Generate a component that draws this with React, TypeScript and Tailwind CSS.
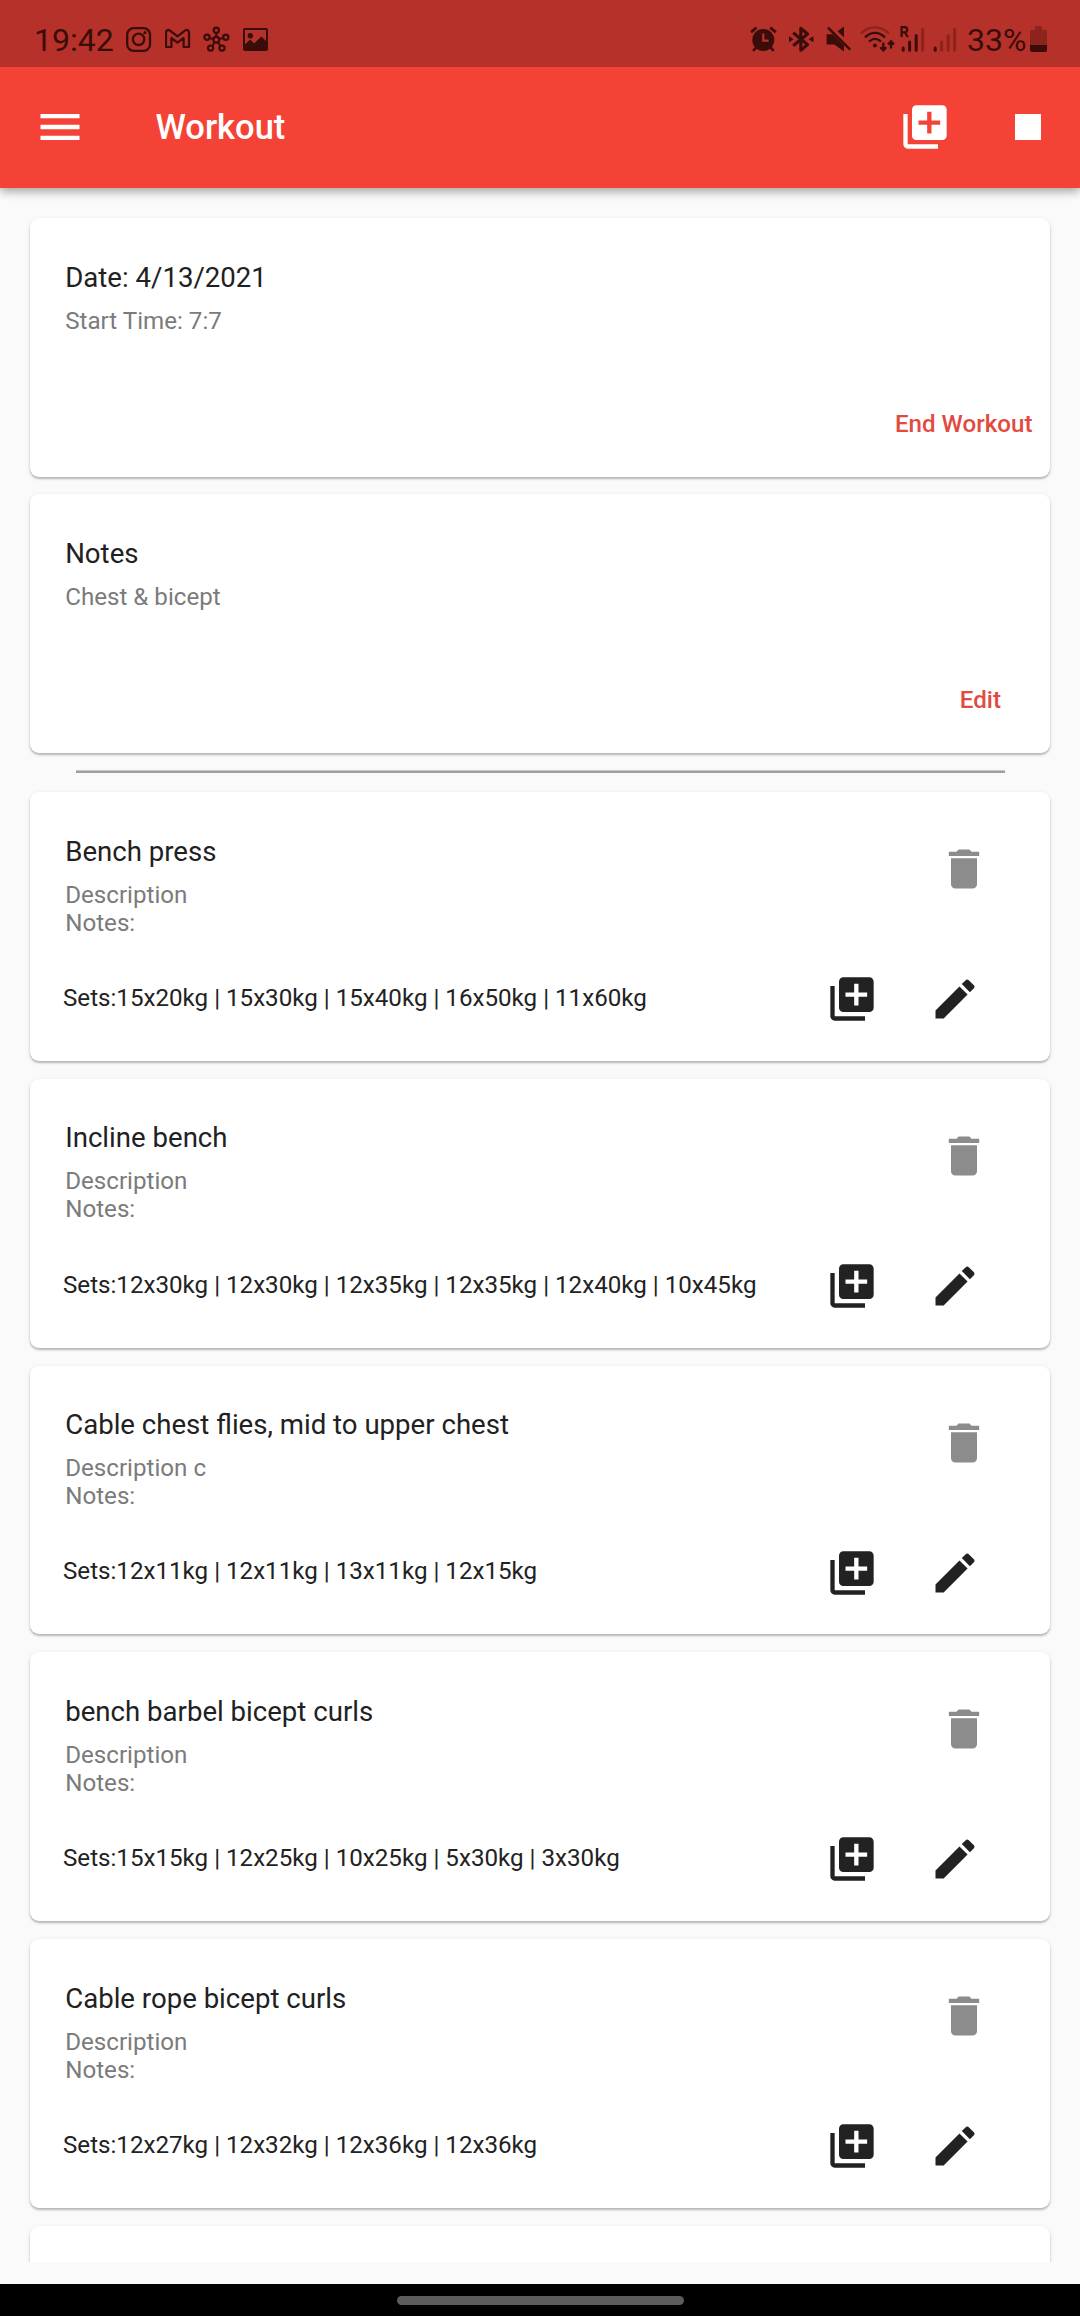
import React from "react";

type Exercise = { name: string; description: string; sets: string };

const exercises: Exercise[] = [
  { name: "Bench press", description: "Description", sets: "15x20kg | 15x30kg | 15x40kg | 16x50kg | 11x60kg" },
  { name: "Incline bench", description: "Description", sets: "12x30kg | 12x30kg | 12x35kg | 12x35kg | 12x40kg | 10x45kg" },
  { name: "Cable chest flies, mid to upper chest", description: "Description c", sets: "12x11kg | 12x11kg | 13x11kg | 12x15kg" },
  { name: "bench barbel bicept curls", description: "Description", sets: "15x15kg | 12x25kg | 10x25kg | 5x30kg | 3x30kg" },
  { name: "Cable rope bicept curls", description: "Description", sets: "12x27kg | 12x32kg | 12x36kg | 12x36kg" },
];

function Icon({ d, className = "" }: { d: string; className?: string }) {
  return (
    <svg viewBox="0 0 24 24" className={`size-[52px] shrink-0 fill-current ${className}`}>
      <path d={d} />
    </svg>
  );
}

const MENU = "M3 18h18v-2H3v2zm0-5h18v-2H3v2zm0-7v2h18V6H3z";
const LIBRARY_ADD =
  "M4 6H2v14c0 1.1.9 2 2 2h14v-2H4V6zm16-4H8c-1.1 0-2 .9-2 2v12c0 1.1.9 2 2 2h12c1.1 0 2-.9 2-2V4c0-1.1-.9-2-2-2zm-1 9h-4v4h-2v-4H9V9h4V5h2v4h4v2z";
const STOP = "M6 6h12v12H6z";
const DELETE = "M6 19c0 1.1.9 2 2 2h8c1.1 0 2-.9 2-2V7H6v12zM19 4h-3.5l-1-1h-5l-1 1H5v2h14V4z";
const EDIT =
  "M3 17.25V21h3.75L17.81 9.94l-3.75-3.75L3 17.25zM20.71 7.04c.39-.39.39-1.02 0-1.41l-2.34-2.34c-.39-.39-1.02-.39-1.41 0l-1.83 1.83 3.75 3.75 1.83-1.83z";

function StatusBar() {
  return (
    <div className="relative z-20 flex h-[67px] shrink-0 items-start bg-[#b63129] pl-[34px] pr-[33px] pt-[26px] text-[#3a0d0b]">
      <span className="-mt-[4px] w-[92px] text-[32px] leading-[37px]">19:42</span>

      {/* Instagram */}
      <svg viewBox="0 0 26 26" className="h-[26px] w-[26px]" fill="none" stroke="currentColor" strokeWidth="2.3">
        <rect x="1.2" y="2.2" width="22.8" height="22.6" rx="6.4" />
        <circle cx="12.6" cy="13.3" r="5.7" />
        <circle cx="18.9" cy="6.7" r="1.6" fill="currentColor" stroke="none" />
      </svg>
      {/* Gmail */}
      <svg viewBox="0 0 26 26" className="ml-[13px] h-[26px] w-[26px]" fill="none" stroke="currentColor" strokeWidth="2.2" strokeLinejoin="round">
        <path d="M1 6.4C1 4 3.5 3.4 5 4.6L12.5 10.4L20 4.6C21.5 3.4 24 4 24 6.4V21H18.6V12L12.5 16.6L6.4 12V21H1Z" />
      </svg>
      {/* Hub with five nodes */}
      <svg viewBox="0 0 26 26" className="ml-[13px] h-[26px] w-[26px] overflow-visible" fill="none" stroke="currentColor" strokeWidth="2.2">
        <circle cx="12.3" cy="13.8" r="2.9" />
        <circle cx="12.3" cy="4.2" r="2.6" />
        <circle cx="3" cy="11.3" r="2.6" />
        <circle cx="21.8" cy="11.3" r="2.6" />
        <circle cx="6.6" cy="22.1" r="2.6" />
        <circle cx="18" cy="22.1" r="2.6" />
        <path d="M12.3 6.8V11M5.4 12L9.5 13M19.2 12L15.1 13M8.1 20L10.6 16.3M16.5 20L14 16.3" />
      </svg>
      {/* Picture */}
      <svg viewBox="0 0 26 26" className="ml-[13px] h-[26px] w-[26px]">
        <path
          fill="currentColor"
          fillRule="evenodd"
          d="M2 2H23Q25 2 25 4V23Q25 25 23 25H2Q0 25 0 23V4Q0 2 2 2ZM2 4V18.6L7.2 13.6L11 17.4L18.4 10.4L23 15V4ZM7.3 7A2.7 2.7 0 1 1 7.3 12.4A2.7 2.7 0 1 1 7.3 7Z"
        />
      </svg>

      <div className="ml-auto flex items-start">
        {/* Alarm */}
        <svg viewBox="0 0 28 26" className="h-[26px] w-[28px]" fill="none" stroke="currentColor" strokeWidth="2.8">
          <circle cx="13.3" cy="14" r="11" fill="currentColor" stroke="none" />
          <path d="M1 6.3L6.5 1.6M25.8 6.3L20.3 1.6M6 21.5L3.2 25M20.8 21.5L23.6 25" />
          <path d="M13.3 7.5V14.6H18.6" stroke="#b63129" strokeWidth="2.2" />
        </svg>
        {/* Bluetooth */}
        <svg viewBox="0 0 26 27" className="ml-[11px] h-[27px] w-[26px]" fill="none" stroke="currentColor" strokeWidth="3.1">
          <path d="M4.2 6.8L18.6 18.6L11.8 24.2V2.4L18.6 8L4.2 19.8" strokeLinejoin="round" />
          <path d="M0 10.2L4.6 13.2L0 16.2ZM24.5 10.2L19.6 13.2L24.5 16.2Z" fill="currentColor" stroke="none" />
        </svg>
        {/* Muted speaker */}
        <svg viewBox="0 0 26 27" className="ml-[11px] h-[27px] w-[26px]" fill="currentColor">
          <path d="M0.6 8.2H6.8L18 19.6V25.6L8.4 18.6H0.6ZM18 0.4V11.4L11.4 5.2Z" />
          <path d="M2 1.6L24.2 23.6" stroke="currentColor" strokeWidth="2.5" />
        </svg>
        {/* Wi-Fi with traffic arrows */}
        <svg viewBox="0 0 36 27" className="ml-[8px] h-[27px] w-[36px]" fill="none" stroke="currentColor" strokeWidth="2.3">
          <path d="M1 7.4C9 -0.7 21 -0.7 29 7.4" stroke="#8c231d" />
          <path d="M5 11.4C11 5.3 19 5.3 25 11.4" />
          <path d="M9 15.6C13 12 17 12 21 15.6" />
          <circle cx="14.9" cy="19.4" r="2" fill="currentColor" stroke="none" />
          <path d="M23.3 16.4V24M20.3 21.2L23.3 24.3L26.3 21.2M31 22.6V15.6M28 18.4L31 15.3L34 18.4" />
        </svg>
        {/* Roaming signal */}
        <svg viewBox="0 0 26 27" className="ml-[4px] h-[27px] w-[26px]" fill="none" stroke="currentColor" strokeWidth="3" strokeLinecap="round">
          <path d="M3.2 22V24.2M9.6 16V24.2M16.2 9.4V24.2" />
          <path d="M22.6 3.4V24.2" stroke="#8c231d" />
          <path d="M1.6 11V1.2H4.6A2.4 2.4 0 0 1 4.6 6.4H1.6M5 6.6L7.8 11" strokeWidth="2.2" strokeLinecap="butt" />
        </svg>
        {/* Second signal */}
        <svg viewBox="0 0 26 27" className="ml-[6px] h-[27px] w-[26px]" fill="none" stroke="#8c231d" strokeWidth="3" strokeLinecap="round">
          <path d="M3.2 22V24.2" stroke="#3a0d0b" />
          <path d="M9.6 16V24.2M16.2 9.4V24.2M22.6 3.4V24.2" />
        </svg>
        <span className="-mt-[4px] ml-[9px] w-[63px] text-[32px] leading-[37px]">33%</span>
        {/* Battery */}
        <svg viewBox="0 0 17 26" className="h-[26px] w-[17px]">
          <path fill="#8c231d" d="M5 0H12V3.8H15Q17 3.8 17 5.8V19H0V5.8Q0 3.8 2 3.8H5Z" />
          <path fill="currentColor" d="M0 19H17V24Q17 26 15 26H2Q0 26 0 24Z" />
        </svg>
      </div>
    </div>
  );
}

function AppBar() {
  return (
    <header className="relative z-10 flex h-[120.5px] shrink-0 items-center bg-[#f44336] pl-[34px] pr-[26px] text-white shadow-[0_3px_9px_rgba(0,0,0,0.28),0_2px_12px_rgba(0,0,0,0.14)]">
      <Icon d={MENU} />
      <h1 className="ml-[69.5px] text-[34.5px] leading-[40px] font-medium">Workout</h1>
      <Icon d={LIBRARY_ADD} className="ml-auto" />
      <Icon d={STOP} className="ml-[51.5px]" />
    </header>
  );
}

const cardClass =
  "flex flex-col rounded-[9px] bg-white shadow-[0_2px_2px_rgba(0,0,0,0.22),0_1px_4px_rgba(0,0,0,0.10)]";

function Heading({ title, lines }: { title: string; lines: string[] }) {
  return (
    <div className="pl-[35.2px] pt-[42.7px]">
      <h2 className="text-[27.6px] leading-[34px] text-[#212121]">{title}</h2>
      <div className="mt-[12px] text-[24.15px] leading-[28px] text-[#7b7b7b]">
        {lines.map((line) => (
          <p key={line}>{line}</p>
        ))}
      </div>
    </div>
  );
}

function InfoCard({ title, line, action, actionClass }: { title: string; line: string; action: string; actionClass: string }) {
  return (
    <section className={`${cardClass} h-[258.5px]`}>
      <Heading title={title} lines={[line]} />
      <button className={`mt-[75.3px] self-end text-[24.15px] leading-[28px] font-medium text-[#e34a3f] ${actionClass}`}>{action}</button>
    </section>
  );
}

function ExerciseCard({ exercise }: { exercise: Exercise }) {
  return (
    <section className={`${cardClass} h-[268.75px] shrink-0`}>
      <div className="flex h-[181px] justify-between">
        <Heading title={exercise.name} lines={[exercise.description, "Notes:"]} />
        <Icon d={DELETE} className="mr-[60px] mt-[51px] text-[#8c8c8c]" />
      </div>
      <div className="flex h-[52px] items-center pl-[33px] pr-[69px] text-[#222222]">
        <p className="-mt-[2.5px] text-[24.15px] leading-[28px]">Sets:{exercise.sets}</p>
        <Icon d={LIBRARY_ADD} className="ml-auto" />
        <Icon d={EDIT} className="ml-[51px]" />
      </div>
    </section>
  );
}

export default function App() {
  return (
    <div className="flex h-[2316px] w-[1080px] flex-col overflow-hidden bg-[#fafafa] font-[Roboto,sans-serif]">
      <StatusBar />
      <AppBar />
      <main className="h-[2074.5px] shrink-0 overflow-hidden px-[30px] pt-[30.5px]">
        <div className="flex flex-col gap-[17.5px]">
          <InfoCard title="Date: 4/13/2021" line="Start Time: 7:7" action="End Workout" actionClass="mr-[17.5px]" />
          <InfoCard title="Notes" line="Chest & bicept" action="Edit" actionClass="mr-[49px]" />
        </div>
        <div className="ml-[46px] mr-[45px] mt-[17.5px] h-[3px] border-t border-[#c8c8c8] bg-[#9f9f9f]" />
        <div className="mt-[19px] flex flex-col gap-[18px]">
          {exercises.map((exercise) => (
            <ExerciseCard key={exercise.name} exercise={exercise} />
          ))}
          <section className={`${cardClass} h-[268.75px] shrink-0`} />
        </div>
      </main>
      <div className="h-[22px] shrink-0" />
      <nav className="flex h-[32px] shrink-0 justify-center bg-black pt-[12px]">
        <div className="h-[9px] w-[287px] rounded-full bg-[#5c5c5c]" />
      </nav>
    </div>
  );
}
